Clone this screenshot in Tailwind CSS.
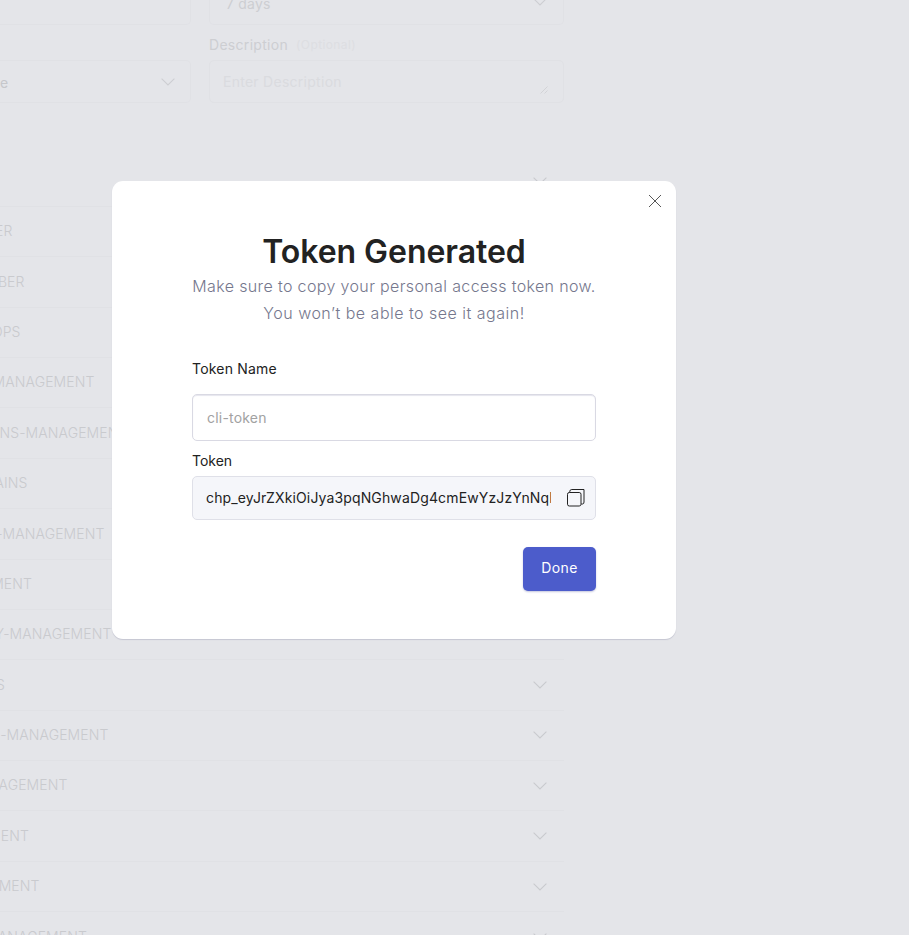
<!DOCTYPE html>
<html lang="en">
<head>
<meta charset="utf-8">
<title>Personal access token</title>
<script src="https://cdn.jsdelivr.net/npm/@tailwindcss/browser@4"></script>
</head>
<body class="relative h-[935px] w-[909px] overflow-hidden bg-[#e4e5e9] font-[Inter,'Liberation_Sans',sans-serif] text-[14px] text-[#222]">
<svg class="hidden"><symbol id="chev" viewBox="0 0 14 8"><path d="M.6.6 7 7 13.4.6" fill="none" stroke="currentColor" stroke-width="1.1"/></symbol></svg>

<!-- Page behind the overlay -->
<main class="w-[564px] text-[#cdced2]">
  <div class="grid grid-cols-[191px_355px] gap-x-[18px]">
    <div class="h-[25px] rounded-br-[5px] border-r border-b border-[#e0e1e5]"></div>
    <div class="flex h-[25px] justify-between rounded-b-[5px] border-x border-b border-[#e0e1e5] pr-[16px] pl-[16px]">
      <span class="-mt-[6px] leading-5 tracking-[0.2px]">7 days</span>
      <svg class="-mt-[2px] h-2 w-[14px]"><use href="#chev"/></svg>
    </div>
    <div></div>
    <div class="flex h-[35px] items-center pt-[4px]"><span class="tracking-[0.3px]">Description</span><span class="ml-[8px] text-[12px] tracking-[0.4px] text-[#dddee2]">(Optional)</span></div>
    <div class="flex h-[43px] items-center justify-between rounded-r-[5px] border-y border-r border-[#e0e1e5] pr-[15px]">
      <span class="pt-[2px] text-[#c6c7cb]">e</span>
      <svg class="h-2 w-[14px]"><use href="#chev"/></svg>
    </div>
    <div class="flex h-[43px] items-center justify-between rounded-[5px] border border-[#e0e1e5] pr-[15px] pl-[13px]">
      <span class="tracking-[0.27px] text-[#dadbdf]">Enter Description</span>
      <svg class="mt-[16px] h-2 w-2" viewBox="0 0 8 8"><path d="M.5 7.5l7-7M4.5 7.5l3-3" fill="none" stroke="currentColor" stroke-width=".8"/></svg>
    </div>
  </div>
  <div id="rows" class="mt-[53.6px] w-[564px] font-light text-[#c9cace]"></div>
</main>

<!-- Dialog -->
<section role="dialog" class="absolute top-[181px] left-[112px] h-[458px] w-[564px] rounded-[11px] bg-white px-[80px] shadow-[0_1px_1px_#c5c6d2]">
  <button aria-label="Close" class="absolute top-[14px] right-[15px]"><svg class="h-[12px] w-[12px]" viewBox="0 0 12 12"><path d="M0 0l12 12M12 0L0 12" stroke="#444" stroke-width=".9"/></svg></button>
  <h1 class="mt-[51px] text-center text-[32px] leading-[40px] font-semibold tracking-[-0.05px] whitespace-nowrap">Token Generated</h1>
  <p class="-mx-5 mt-[1px] text-center text-[16px] leading-[27px] font-light tracking-[0.36px] whitespace-nowrap text-[#75778d]">Make sure to copy your personal access token now.<br><span class="tracking-[0.49px]">You won’t be able to see it again!</span></p>
  <label class="mt-[32px] block leading-[20px] tracking-[0.2px]">Token Name</label>
  <div class="mt-[15px] flex h-[47px] items-center rounded-[5px] border border-[#d9d9e3] pl-[14px] tracking-[0.2px] text-[#a2a2a2] shadow-[inset_0_1px_1px_#e6e6ee]">cli-token</div>
  <label class="mt-[10px] block leading-[20px]">Token</label>
  <div class="mt-[5px] flex h-[44px] items-center rounded-[5px] border border-[#dfe0e8] bg-[#f5f6fa] pl-[13px]">
    <span class="w-[345px] overflow-hidden pb-[2px] tracking-[0.14px] whitespace-nowrap">chp_eyJrZXkiOiJya3pqNGhwaDg4cmEwYzJzYnNqN</span>
    <svg class="ml-[16px] h-[18px] w-[18px]" viewBox="0 0 18 18" fill="none" stroke="#222" stroke-width="1"><rect x=".5" y="3.5" width="13.5" height="13.5" rx="1.8"/><path d="M2.8 3.5V2.2Q3 .5 4.8.5H17V13Q17 15 15.5 15H14.2"/></svg>
  </div>
  <div class="mt-[27px] flex justify-end"><button class="h-[44px] w-[73px] rounded-[5px] bg-[#4c5ccb] pb-[3px] tracking-[0.35px] text-white shadow-[0_1px_2px_#c4c6dd]">Done</button></div>
</section>

<script>
// Scope names with the pixel where each visible name ends
const scopes = [['', 0], ['ER', 12.5], ['BER', 24.5], ['OPS', 20.5], ['MANAGEMENT', 94.5], ['NS-MANAGEMENT', 127.5], ['AINS', 27.5], ['-MANAGEMENT', 104.5], ['MENT', 32], ['Y-MANAGEMENT', 111.5], ['S', 5], ['-MANAGEMENT', 108.5], ['NAGEMENT', 67.5], ['ENT', 29], ['MENT', 39.5], ['MANAGEMENT', 87]];
document.getElementById('rows').innerHTML = scopes.map(([name, end]) =>
  `<div class="flex h-[50.38px] items-center justify-between border-b border-[#e0e1e5] pr-[17px]"><span class="flex justify-end pb-[1.6px] whitespace-nowrap tracking-[0.1px]" style="width:${end}px">${name}</span><svg class="h-2 w-[14px] shrink-0"><use href="#chev"/></svg></div>`).join('');
</script>
</body>
</html>
